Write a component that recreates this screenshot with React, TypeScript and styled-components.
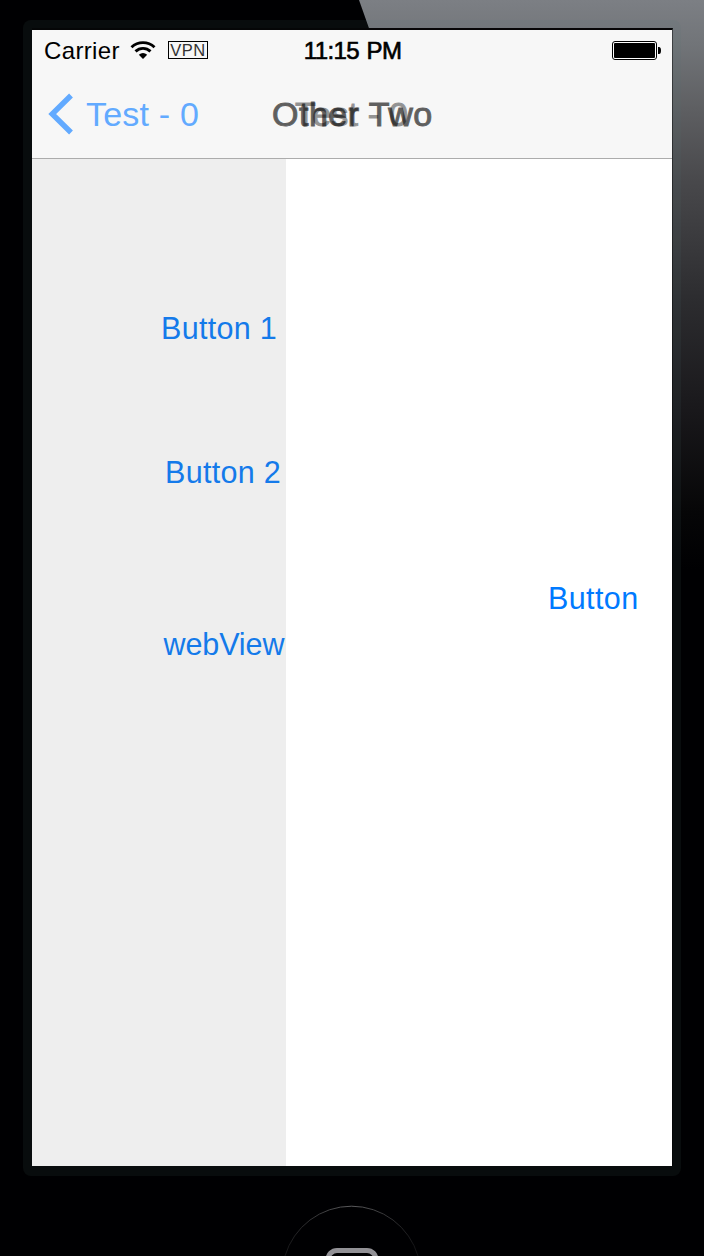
import React from "react";
import styled, { createGlobalStyle } from "styled-components";

const GlobalStyle = createGlobalStyle`
  body { margin: 0; background: #000; font-family: "Liberation Sans", Arial, sans-serif; }
  * { box-sizing: border-box; }
`;

const Device = styled.main`
  position: relative;
  width: 704px;
  height: 1256px;
  overflow: hidden;
  display: flex;
  flex-direction: column;
  align-items: flex-start;
  padding: 20px 0 0 23px;
  background: #000002;
`;

const Glare = styled.svg`
  position: absolute;
  inset: 0;
`;

const Bezel = styled.section`
  position: relative;
  width: 658px;
  height: 1156px;
  flex: none;
  padding: 8px 8px 9px 9px;
  border-radius: 8px;
  background: rgba(80, 115, 120, 0.1);
`;

const Screen = styled.div`
  display: flex;
  flex-direction: column;
  width: 641px;
  height: 1138px;
  border-top: 2px solid #050607;
  border-right: 1px solid rgba(0, 0, 0, 0.45);
  background: #fff;
  background-clip: padding-box;
`;

const Header = styled.header`
  height: 129px;
  flex: none;
  display: flex;
  flex-direction: column;
  background: #f7f7f7;
  border-bottom: 1px solid #acacac;
`;

const StatusBar = styled.div`
  display: grid;
  grid-template-columns: 1fr auto 1fr;
  align-items: center;
  height: 40px;
  padding: 0 11px;
  color: #000;
  font-size: 24px;
  line-height: 38px;
`;

const StatusGroup = styled.div`
  display: flex;
  align-items: center;
`;

const Carrier = styled.span`
  width: 87px;
  padding: 2px 0 0 1px;
  letter-spacing: 0.35px;
`;

const WifiIcon = styled.svg`
  margin-bottom: 1px;
`;

const Vpn = styled.span`
  width: 40px;
  height: 18px;
  margin: 0 0 1px 12px;
  border: 1px solid #000;
  font-size: 16.5px;
  line-height: 17px;
  text-align: center;
  letter-spacing: 0.6px;
  color: #333;
`;

const Time = styled.span`
  padding: 2px 0 0 1px;
  -webkit-text-stroke: 0.65px #000;
  letter-spacing: -0.6px;
  word-spacing: 1.5px;
`;

const Battery = styled.svg`
  justify-self: end;
`;

const NavBar = styled.nav`
  position: relative;
  display: flex;
  align-items: center;
  height: 88px;
  padding-left: 16px;
`;

const BackButton = styled.button`
  display: flex;
  align-items: center;
  gap: 13px;
  padding: 0;
  border: 0;
  background: none;
  color: #62aaff;
  font: 34px/40px "Liberation Sans", Arial, sans-serif;
  letter-spacing: 0.2px;
`;

const Title = styled.h1<{ $left: number; $opacity: number; $spacing: number }>`
  position: absolute;
  top: 24px;
  left: ${(p) => p.$left}px;
  margin: 0;
  color: #000;
  opacity: ${(p) => p.$opacity};
  font-size: 34px;
  font-weight: 400;
  line-height: 40px;
  letter-spacing: ${(p) => p.$spacing}px;
  white-space: nowrap;
  -webkit-text-stroke: 1px #000;
`;

const Views = styled.div`
  flex: 1;
  display: grid;
  grid-template-columns: 254px 386px;
`;

const View = styled.div<{ $background: string }>`
  display: flex;
  flex-direction: column;
  align-items: flex-start;
  background: ${(p) => p.$background};
`;

const LinkButton = styled.button<{ $top: number; $left: number; $color?: string; $spacing?: number }>`
  margin: ${(p) => p.$top}px 0 0 ${(p) => p.$left}px;
  padding: 0;
  border: 0;
  background: none;
  color: ${(p) => p.$color ?? "#147aea"};
  font: 30.5px/36px "Liberation Sans", Arial, sans-serif;
  letter-spacing: ${(p) => p.$spacing ?? 0.3}px;
  white-space: nowrap;
`;

const HomeButton = styled.svg`
  position: relative;
  margin: 28px 0 0 259px;
  flex: none;
`;

export default function App() {
  return (
    <>
      <GlobalStyle />
      <Device>
        <Glare width="704" height="1256" viewBox="0 0 704 1256">
          <defs>
            <linearGradient id="glare" gradientUnits="userSpaceOnUse" x1="0" y1="0" x2="0" y2="570">
              <stop offset="0" stopColor="#7c7f84" />
              <stop offset="0.08" stopColor="#717478" />
              <stop offset="0.19" stopColor="#5e5f62" />
              <stop offset="0.32" stopColor="#48484b" />
              <stop offset="0.52" stopColor="#2d2d30" />
              <stop offset="0.72" stopColor="#19181b" />
              <stop offset="0.9" stopColor="#060607" />
              <stop offset="1" stopColor="#000002" />
            </linearGradient>
          </defs>
          <path d="M359 0H704V570H561Z" fill="url(#glare)" />
        </Glare>
        <Bezel>
          <Screen>
            <Header>
              <StatusBar>
                <StatusGroup>
                  <Carrier>Carrier</Carrier>
                  <WifiIcon width="26" height="18" viewBox="0 0 26 18">
                    <g fill="none" stroke="#000" strokeWidth="2.9">
                      <path d="M1.5 6.2C8 .1 18 .1 24.5 6.2" />
                      <path d="M5.5 10.4C9.8 6.4 16.2 6.4 20.5 10.4" />
                    </g>
                    <path d="M8.8 13.8Q13 10.4 17.2 13.8L13 18Z" />
                  </WifiIcon>
                  <Vpn>VPN</Vpn>
                </StatusGroup>
                <Time>11:15 PM</Time>
                <Battery width="49" height="19" viewBox="0 0 49 19">
                  <rect x="0.5" y="0.5" width="44" height="18" rx="2.5" fill="#fff" stroke="#000" />
                  <rect x="2" y="2" width="41" height="15" rx="1" />
                  <path d="M46 6H47Q49 6 49 9.5T47 13H46Z" />
                </Battery>
              </StatusBar>
              <NavBar>
                <BackButton>
                  <svg width="25" height="42" viewBox="0 0 25 42">
                    <path d="M23 2.5L4.2 21L23 39.5" fill="none" stroke="#62aaff" strokeWidth="5.4" />
                  </svg>
                  Test - 0
                </BackButton>
                <Title $left={263} $opacity={0.4} $spacing={0.2}>Test - 0</Title>
                <Title $left={240} $opacity={0.61} $spacing={0.5}>Other Two</Title>
              </NavBar>
            </Header>
            <Views>
              <View $background="#eeeeee">
                <LinkButton $top={151} $left={129}>Button 1</LinkButton>
                <LinkButton $top={108} $left={133}>Button 2</LinkButton>
                <LinkButton $top={136} $left={131.5} $spacing={-0.1}>webView</LinkButton>
              </View>
              <View $background="#ffffff">
                <LinkButton $top={421} $left={262} $color="#007aff" $spacing={0.4}>Button</LinkButton>
              </View>
            </Views>
          </Screen>
        </Bezel>
        <HomeButton width="140" height="52" viewBox="282 1204 140 52">
          <defs>
            <linearGradient id="ring" x1="0" x2="1">
              <stop offset="0" stopColor="#161618" />
              <stop offset="0.5" stopColor="#5c5c5e" />
              <stop offset="1" stopColor="#111113" />
            </linearGradient>
          </defs>
          <path d="M285 1256A69.3 69.3 0 0 1 418 1256" fill="none" stroke="url(#ring)" />
          <rect x="328" y="1250.5" width="48" height="48" rx="9" fill="none" stroke="#929196" strokeWidth="5" />
        </HomeButton>
      </Device>
    </>
  );
}
